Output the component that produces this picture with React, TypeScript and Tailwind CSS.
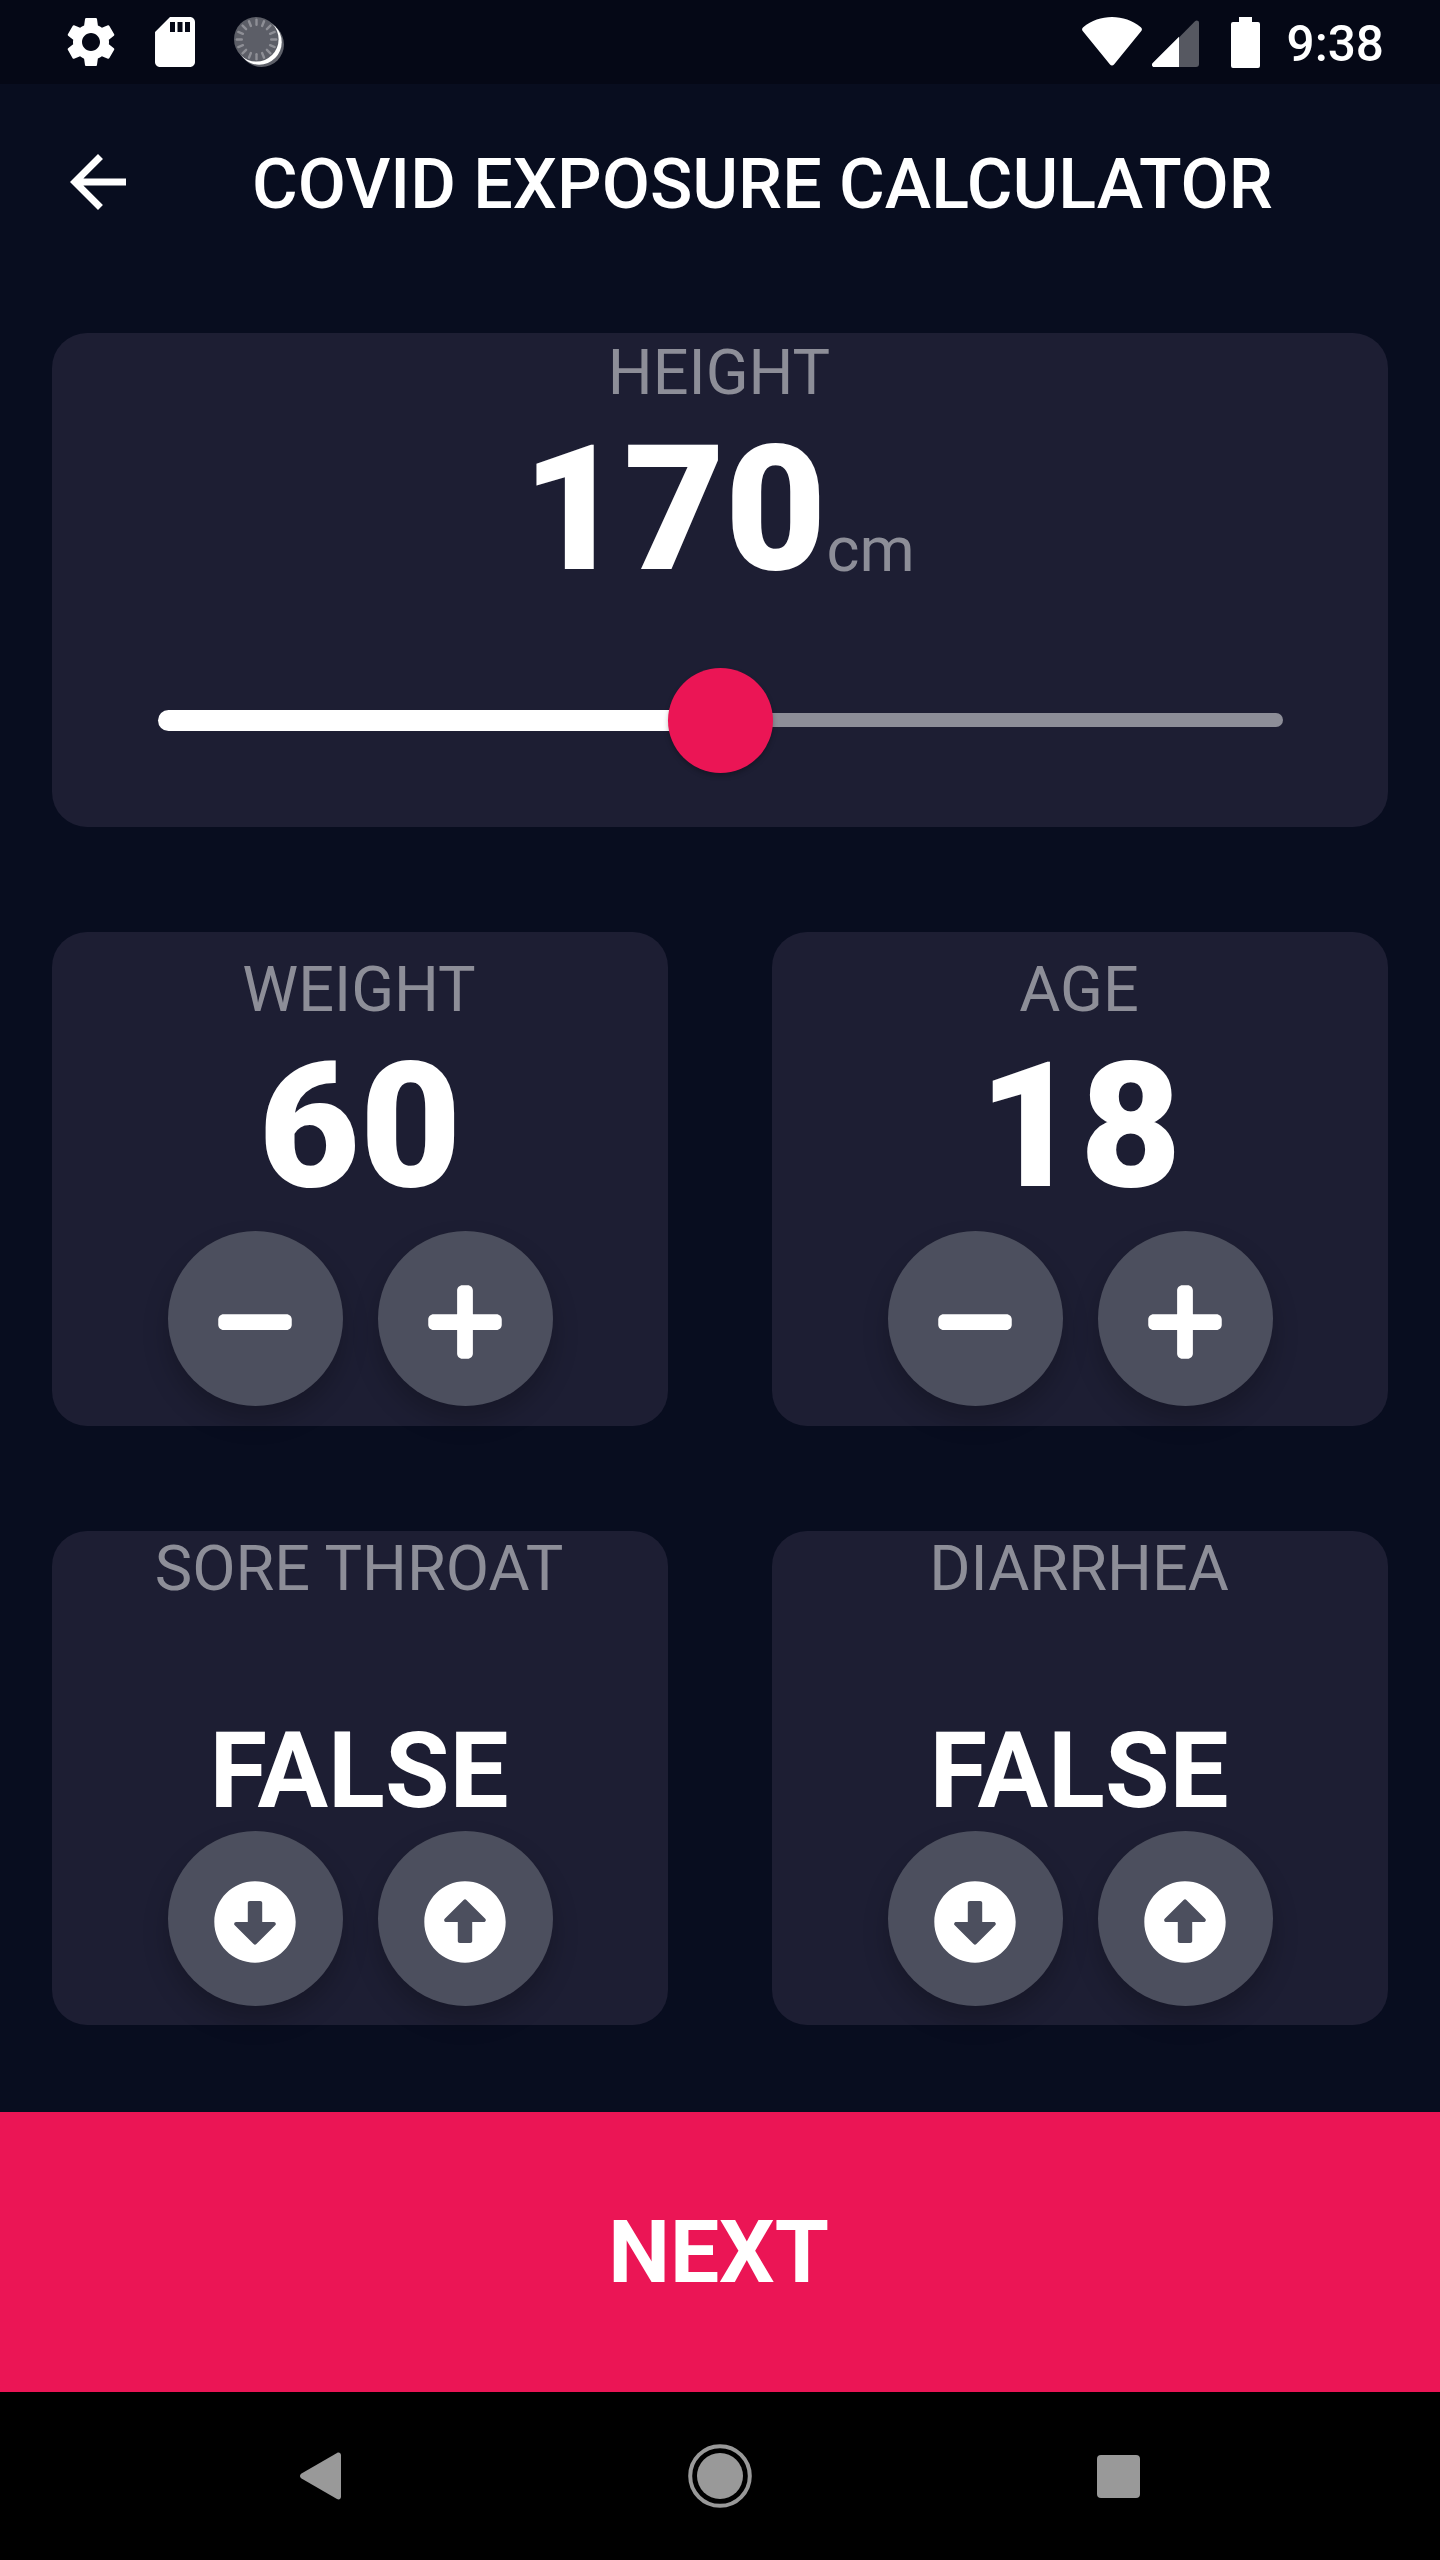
import type { ReactNode } from "react";
import { MdSettings, MdSdCard, MdArrowBack } from "react-icons/md";
import { FaMinus, FaPlus, FaArrowAltCircleDown, FaArrowAltCircleUp } from "react-icons/fa";

const TICKS = Array.from({ length: 16 }, (_, i) => i * 22.5);

function SpinnerIcon() {
  return (
    <svg className="h-[50px] w-[50px]" viewBox="0 0 50 50">
      <circle cx="27.5" cy="27.5" r="22.5" fill="#5e6069" />
      <circle cx="25.2" cy="25.2" r="22.5" fill="#ffffff" />
      <circle cx="22.3" cy="22.3" r="22.3" fill="#5c5e67" />
      {TICKS.map((angle) => (
        <line
          key={angle}
          x1="22.5"
          y1="2.8"
          x2="22.5"
          y2="7.8"
          stroke="#8e8f96"
          strokeWidth="2.4"
          strokeLinecap="round"
          transform={`rotate(${angle} 22.5 22.5)`}
        />
      ))}
    </svg>
  );
}

function StatusBar() {
  return (
    <div className="flex h-[84px] items-center justify-between bg-[#050816] pl-[61px] pr-[56px]">
      <div className="flex items-center">
        <MdSettings className="size-[60px]" />
        <MdSdCard className="ml-6 size-[60px]" />
        <div className="ml-[29px]">
          <SpinnerIcon />
        </div>
      </div>
      <div className="flex items-center">
        <svg className="h-[50px] w-[60px]" viewBox="0 0 60 50">
          <path
            d="M1.2 10.2C9.5 3.5 19.500 0 30 0s20.500 3.500 28.800 10.200c1.300 1 1.500 2.600.5 3.900L32 47.500c-1 1.300-3 1.300-4 0L.7 14.100c-1-1.300-.8-2.900.5-3.900z"
            fill="#fff"
          />
        </svg>
        <svg className="ml-[10px] h-[50px] w-[47px]" viewBox="0 0 47 50">
          <path d="M27 20.500 43 4.300c1.500-1.500 4-.6 4 1.500V47a3 3 0 0 1-3 3H27z" fill="#565861" />
          <path d="M27 19.700V50H2c-2 0-2.800-2.400-1.300-3.900z" fill="#fff" />
        </svg>
        <svg className="ml-8 h-[51px] w-[29px]" viewBox="0 0 29 51">
          <path d="M8 0h13v5h6a2 2 0 0 1 2 2v42a2 2 0 0 1-2 2H2a2 2 0 0 1-2-2V7a2 2 0 0 1 2-2h6z" fill="#fff" />
        </svg>
        <span className="ml-[27px] mt-[3px] text-[49.5px] font-medium leading-[58px]">9:38</span>
      </div>
    </div>
  );
}

function Card({ className, children }: { className: string; children: ReactNode }) {
  return (
    <section className={`flex h-[494px] flex-1 flex-col items-center rounded-[35px] bg-[#1d1e33] ${className}`}>
      {children}
    </section>
  );
}

function Label({ children }: { children: ReactNode }) {
  return <h2 className="mr-[2px] text-[63px] leading-[74px] text-[#8d8e98]">{children}</h2>;
}

function RoundButton({ label, children }: { label: string; children: ReactNode }) {
  return (
    <button
      aria-label={label}
      className="flex size-[175px] items-center justify-center rounded-full bg-[#4c4f5e] pt-2 text-[84px] text-white shadow-[0_14px_26px_rgba(0,0,0,0.22)]"
    >
      {children}
    </button>
  );
}

function CounterCard({ label, value }: { label: string; value: number }) {
  return (
    <Card className="pt-[21px]">
      <Label>{label}</Label>
      <span className="-mt-[3px] text-[175px] font-black leading-[205px]">{value}</span>
      <div className="mt-[2px] flex gap-[35px]">
        <RoundButton label={`Decrease ${label}`}>
          <FaMinus />
        </RoundButton>
        <RoundButton label={`Increase ${label}`}>
          <FaPlus />
        </RoundButton>
      </div>
    </Card>
  );
}

function SymptomCard({ label, value }: { label: string; value: string }) {
  return (
    <Card className="pt-[1px]">
      <Label>{label}</Label>
      <span className="mr-[2px] mt-[104px] text-[105px] font-bold leading-[123px]">{value}</span>
      <div className="-mt-[2px] flex gap-[35px]">
        <RoundButton label={`${label} no`}>
          <FaArrowAltCircleDown />
        </RoundButton>
        <RoundButton label={`${label} yes`}>
          <FaArrowAltCircleUp />
        </RoundButton>
      </div>
    </Card>
  );
}

function HeightSlider() {
  return (
    <div className="mt-[56px] flex h-[105px] w-[1125px] items-center">
      <div className="h-[21px] flex-1 rounded-l-full bg-white" />
      <div className="z-10 -mx-1 size-[105px] rounded-full bg-[#eb1555] shadow-[0_3px_5px_rgba(0,0,0,0.25)]" />
      <div className="h-[14px] flex-1 rounded-r-full bg-[#8d8e98]" />
    </div>
  );
}

function NavigationBar() {
  return (
    <nav className="flex h-[168px] items-center justify-between bg-black px-[300px]">
      <svg className="h-[48px] w-[42px]" viewBox="0 0 42 48">
        <path d="M1.500 21.500 37 1c2-1 4 0 4 2.500v41c0 2.500-2 3.500-4 2.500L1.500 26.500c-2-1.300-2-3.700 0-5z" fill="#999" />
      </svg>
      <svg className="size-[64px]" viewBox="0 0 64 64">
        <circle cx="32" cy="32" r="29.800" fill="none" stroke="#999" strokeWidth="4" />
        <circle cx="32" cy="32" r="23" fill="#999" />
      </svg>
      <div className="size-[43px] rounded-[4px] bg-[#999]" />
    </nav>
  );
}

export default function App() {
  return (
    <main className="flex h-[2560px] w-[1440px] flex-col bg-[#080d1f] font-[Roboto,sans-serif] text-white">
      <StatusBar />
      <header className="flex h-[196px] items-center pl-[56px]">
        <MdArrowBack className="size-[84px]" />
        <h1 className="ml-[112px] mt-[3px] text-[70px] font-medium leading-[82px]">COVID EXPOSURE CALCULATOR</h1>
      </header>
      <div className="flex flex-col gap-[105px] px-[52px] pt-[52.5px]">
        <div className="flex">
          <Card className="pt-[3px]">
            <Label>HEIGHT</Label>
            <div className="-mt-[3px] mr-[3px] flex items-baseline">
              <span className="text-[175px] font-black leading-[205px]">170</span>
              <span className="relative top-[2px] text-[63px] leading-[74px] text-[#8d8e98]">cm</span>
            </div>
            <HeightSlider />
          </Card>
        </div>
        <div className="flex gap-[104px]">
          <CounterCard label="WEIGHT" value={60} />
          <CounterCard label="AGE" value={18} />
        </div>
        <div className="flex gap-[104px]">
          <SymptomCard label="SORE THROAT" value="FALSE" />
          <SymptomCard label="DIARRHEA" value="FALSE" />
        </div>
      </div>
      <button className="mt-auto h-[280px] bg-[#eb1555] pr-[3px] text-[87.5px] font-bold leading-[102px]">NEXT</button>
      <NavigationBar />
    </main>
  );
}
